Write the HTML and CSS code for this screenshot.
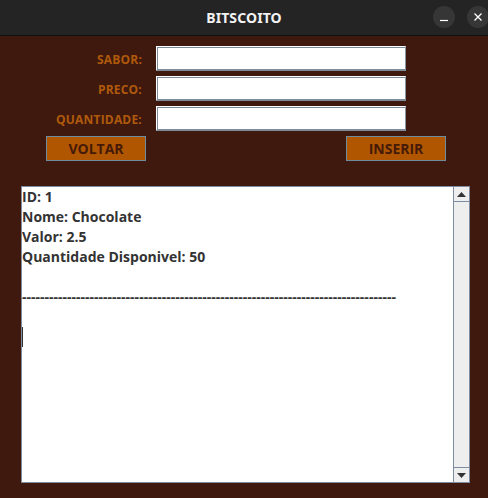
FILE: index.html
```html
<!DOCTYPE html>
<html>
<head>
<meta charset="utf-8">
<link rel="stylesheet" href="styles.css">
</head>
<body>
<div class="window">
  <div class="titlebar">
    <span class="title">BITSCOITO</span>
    <div class="controls">
      <span class="ctl"><svg width="22" height="22" viewBox="0 0 22 22"><line x1="7" y1="14.5" x2="15" y2="14.5" stroke="#ffffff" stroke-width="1.2"/></svg></span>
      <span class="ctl"><svg width="22" height="22" viewBox="0 0 22 22"><path d="M7.5 7.5 L14.5 14.5 M14.5 7.5 L7.5 14.5" stroke="#ffffff" stroke-width="1.3"/></svg></span>
    </div>
  </div>
  <div class="content">
    <div class="form">
      <label class="lbl">SABOR:</label><div class="field"></div>
      <label class="lbl">PRECO:</label><div class="field"></div>
      <label class="lbl">QUANTIDADE:</label><div class="field"></div>
    </div>
    <div class="buttons">
      <button class="btn">VOLTAR</button>
      <button class="btn">INSERIR</button>
    </div>
    <div class="textarea">
      <div class="text">
        <div class="line">ID: 1</div>
        <div class="line">Nome: Chocolate</div>
        <div class="line">Valor: 2.5</div>
        <div class="line">Quantidade Disponivel: 50</div>
        <div class="line">&nbsp;</div>
        <div class="line">-----------------------------------------------------------------------------------</div>
        <div class="line">&nbsp;</div>
        <div class="line"><span class="caret"></span></div>
      </div>
      <div class="scrollbar">
        <div class="sbtn"><svg width="9" height="5" viewBox="0 0 9 5"><path d="M0 5 L4.5 0 L9 5 Z" fill="#333"/></svg></div>
        <div class="track"></div>
        <div class="sbtn"><svg width="9" height="5" viewBox="0 0 9 5"><path d="M0 0 L4.5 5 L9 0 Z" fill="#333"/></svg></div>
      </div>
    </div>
  </div>
</div>
</body>
</html>
```
FILE: styles.css
```css
html, body {
  margin: 0;
  padding: 0;
  background: #3f190e;
}
.window {
  width: 488px;
  height: 498px;
  display: flex;
  flex-direction: column;
  overflow: hidden;
}
.titlebar {
  height: 35px;
  flex: none;
  background: #242424;
  border-bottom: 1px solid #121212;
  position: relative;
  display: flex;
  align-items: center;
  justify-content: center;
}
.title {
  font-family: "Noto Sans", sans-serif;
  font-weight: bold;
  font-size: 14px;
  color: #f2f2f2;
  letter-spacing: 0.1px;
}
.controls {
  position: absolute;
  right: -1px;
  top: 6px;
  display: flex;
  gap: 12px;
}
.ctl {
  width: 22px;
  height: 22px;
  border-radius: 50%;
  background: #363636;
  display: flex;
}
.content {
  flex: 1;
  background: #3f190e;
  padding-top: 10px;
  display: flex;
  flex-direction: column;
}
.form {
  display: grid;
  grid-template-columns: 142px 250px;
  column-gap: 14px;
  row-gap: 5px;
  grid-auto-rows: 25px;
}
.lbl {
  font-family: "Open Sans", sans-serif;
  font-weight: bold;
  font-size: 12px;
  letter-spacing: 0.2px;
  color: #b0590c;
  text-align: right;
  line-height: 25px;
  padding-top: 1px;
}
.field {
  background: #ffffff;
  border: 1px solid #ffffff;
  border-right-color: #8a98a6;
  border-bottom: 2px solid #7e8c9a;
  box-shadow: inset 1px 1px 0 #7e8c9a;
  box-sizing: border-box;
}
.buttons {
  margin-top: 5px;
  padding-left: 46px;
  width: 400px;
  display: flex;
  justify-content: space-between;
}
.btn {
  width: 100px;
  height: 25px;
  box-sizing: border-box;
  background: #b05600;
  border: 1px solid #6e8ba0;
  color: #451a08;
  font-family: "Open Sans", sans-serif;
  font-weight: bold;
  font-size: 14px;
  padding: 0;
  margin: 0;
}
.textarea {
  margin-top: 25px;
  margin-left: 21px;
  width: 449px;
  height: 297px;
  box-sizing: border-box;
  border: 1px solid #7d8ca0;
  background: #ffffff;
  display: flex;
}
.text {
  flex: 1;
  padding-left: 0;
  font-family: "Open Sans", sans-serif;
  font-weight: bold;
  font-size: 14px;
  line-height: 20px;
  color: #333333;
  overflow: hidden;
}
.line {
  white-space: pre;
  height: 20px;
}
.caret {
  display: inline-block;
  width: 1px;
  height: 20px;
  background: #333;
  vertical-align: top;
}
.scrollbar {
  width: 15px;
  border-left: 1px solid #7d8ca0;
  background: #eeeeee;
  display: flex;
  flex-direction: column;
}
.sbtn {
  height: 15px;
  box-sizing: border-box;
  border-bottom: 1px solid #7d8ca0;
  display: flex;
  align-items: center;
  justify-content: center;
}
.sbtn:last-child {
  border-bottom: none;
  border-top: 1px solid #7d8ca0;
}
.track {
  flex: 1;
}
```
